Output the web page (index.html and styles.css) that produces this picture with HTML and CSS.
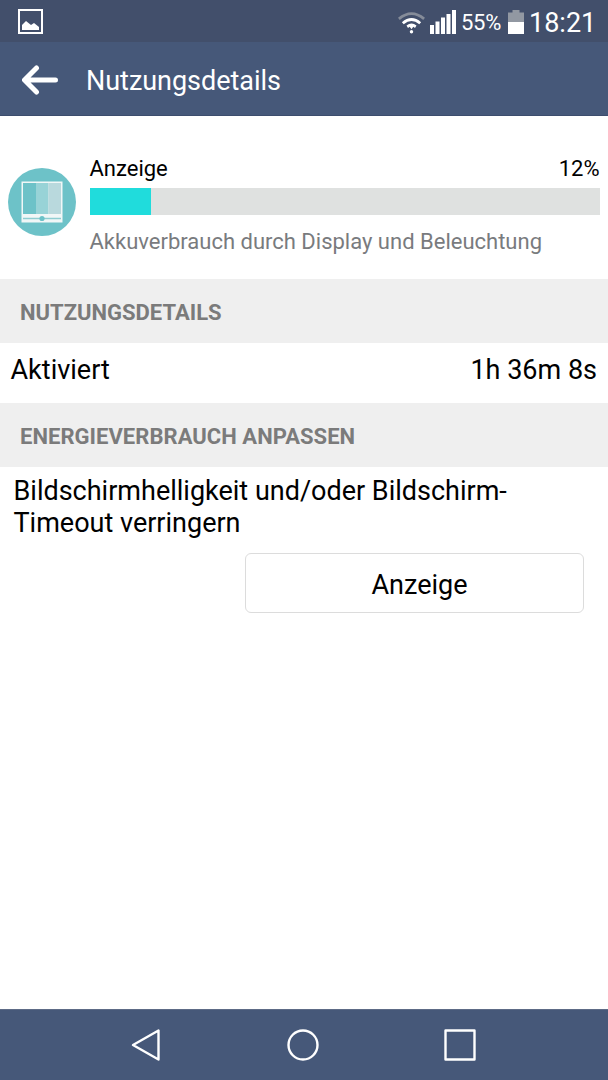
FILE: index.html
```html
<!DOCTYPE html>
<html lang="de">
<head>
<meta charset="utf-8">
<title>Nutzungsdetails</title>
<link rel="stylesheet" href="styles.css">
</head>
<body>
<div class="screen">
  <div class="status-bar">
    <svg class="status-image" width="26" height="26" viewBox="0 0 26 26"><rect x="1" y="1" width="23" height="23" fill="none" stroke="#fff" stroke-width="2"/><path d="M4 21v-5l4-4 5 4 3-2 5 4v3z" fill="#fff"/></svg>
    <svg class="status-wifi" width="27" height="22" viewBox="0 0 27 22"><g fill="none" stroke-width="2.8"><path d="M.9 6.8Q13.5-3.5 26.1 6.800" stroke="#858c99"/><path d="M4.800 11.200Q13.500 3.800 22.200 11.200" stroke="#fff"/></g><path d="M8.500 13.500Q13.500 9.500 18.500 13.500L17 16l-1.700-1.300-1.800 2.500-1.800-2.500L10 16z" fill="#fff"/><circle cx="13.500" cy="19.700" r="1.700" fill="#fff"/></svg>
    <svg class="status-signal" width="26" height="24" viewBox="0 0 26 24"><path d="M0 15h4v9H0zM5.500 11.500h4V24h-4zM11 7.500h4V24h-4zM16.500 4h4v20h-4zM22 0h4v24h-4z" fill="#fff"/></svg>
    <span class="battery-level">55%</span>
    <svg class="status-battery" width="16" height="24" viewBox="0 0 16 24"><path d="M0 2.500h4.500V0h7v2.500H16V12H0z" fill="#9298a2"/><path d="M0 12h16v12H0z" fill="#fff"/></svg>
    <span class="clock">18:21</span>
  </div>
  <header class="app-bar">
    <svg width="38" height="30" viewBox="0 0 38 30"><path d="M33.500 15H3M14.500 3L2.500 15l12 12" fill="none" stroke="#fff" stroke-width="5" stroke-linecap="round" stroke-linejoin="round"/></svg>
    <h1 class="title">Nutzungsdetails</h1>
  </header>
  <main class="content">
    <section class="usage">
      <svg class="usage-icon" width="68" height="68" viewBox="0 0 68 68"><circle cx="34" cy="34" r="34" fill="#6dc2c8"/><path d="M13.500 13.500h41v41h-41z" fill="#f1f7f7"/><path d="M15 15h13v31H15z" fill="#6dc2c8"/><path d="M28 15h12.500v31H28z" fill="#98d3d7"/><path d="M40.500 15H53v31H40.500z" fill="#b9d9dd"/><path d="M15 50.500h38" stroke="#8fcdd1" stroke-width="1.500"/><circle cx="34" cy="50.500" r="2.600" fill="#6dc2c8"/></svg>
      <div class="usage-body">
        <div class="usage-head"><span>Anzeige</span><span>12%</span></div>
        <div class="meter"><div class="meter-fill" style="width:12%"></div></div>
        <p class="usage-note">Akkuverbrauch durch Display und Beleuchtung</p>
      </div>
    </section>
    <h2 class="section-title">NUTZUNGSDETAILS</h2>
    <div class="row"><span>Aktiviert</span><span>1h 36m 8s</span></div>
    <h2 class="section-title section-title-wide">ENERGIEVERBRAUCH ANPASSEN</h2>
    <p class="advice">Bildschirmhelligkeit und/oder Bildschirm-<br>Timeout verringern</p>
    <button class="action">Anzeige</button>
  </main>
  <nav class="nav-bar">
    <svg width="32" height="36" viewBox="0 0 32 36"><path d="M28.500 3.500v29L3 18z" fill="none" stroke="#fff" stroke-width="2.400" stroke-linejoin="round"/></svg>
    <svg width="32" height="36" viewBox="0 0 32 36"><circle cx="16" cy="18" r="14.500" fill="none" stroke="#fff" stroke-width="2.400"/></svg>
    <svg width="32" height="36" viewBox="0 0 32 36"><rect x="1.500" y="3.500" width="29" height="29" fill="none" stroke="#fff" stroke-width="2.400" stroke-linejoin="round"/></svg>
  </nav>
</div>
</body>
</html>
```
FILE: styles.css
```css
* { box-sizing: border-box; }
body { margin: 0; font-family: Roboto, sans-serif; color: #000; background: #fff; }
h1, h2, p { margin: 0; }
svg { display: block; flex: none; }
.screen { display: flex; flex-direction: column; width: 608px; height: 1080px; overflow: hidden; }
.status-bar { display: flex; align-items: center; height: 42px; padding: 1px 13px 0 18px; background: #424f6b; color: #fff; }
.status-image { margin-right: auto; }
.status-signal { margin-left: 5px; }
.status-wifi { margin-top: 2px; }
.battery-level { width: 41px; margin: 2px 6px 0 5px; font-size: 22px; line-height: 26px; letter-spacing: -0.3px; white-space: nowrap; }
.clock { width: 66px; margin: 2px 0 0 5px; font-size: 27px; line-height: 30px; white-space: nowrap; }
.app-bar { display: flex; align-items: center; gap: 26px; height: 74px; padding: 3px 0 0 22px; background: #465879; border-bottom: 1px solid #3d4d6d; color: #fff; }
.title { padding-top: 1px; font-size: 27px; font-weight: 400; line-height: 32px; letter-spacing: -0.03px; }
.content { flex: 1; display: flex; flex-direction: column; }
.usage { display: flex; gap: 13.500px; height: 163px; padding: 40px 8.500px 0 8px; }
.usage-icon { margin-top: 12px; }
.usage-body { flex: 1; }
.usage-head { display: flex; justify-content: space-between; height: 32px; font-size: 22px; line-height: 26px; }
.meter { height: 27px; background: #dfe1e0; }
.meter-fill { height: 100%; background: #20dcdc; }
.usage-note { padding-top: 14px; font-size: 22px; line-height: 26px; color: #797b7e; }
.section-title { height: 64px; padding: 2px 20px 0; background: #efefef; color: #7b7b7b; font-size: 22px; font-weight: 700; line-height: 64px; }
.section-title-wide { letter-spacing: 0.04px; }
.row { display: flex; justify-content: space-between; height: 60px; padding: 11px 11px 0 10.500px; font-size: 27px; line-height: 32px; }
.advice { padding: 8px 13px 0 13.500px; font-size: 27px; line-height: 32px; }
.action { align-self: flex-end; width: 339px; height: 60px; margin: 14px 24px 0 0; padding: 3px 0 0 10px; border: 1.500px solid #dcdcdc; border-radius: 6px; background: #fff; color: #000; font: 27px/32px Roboto, sans-serif; }
.nav-bar { display: flex; align-items: center; justify-content: center; gap: 125px; height: 71px; padding-right: 2px; background: #465879; border-top: 1px solid #5d6b86; }
```
